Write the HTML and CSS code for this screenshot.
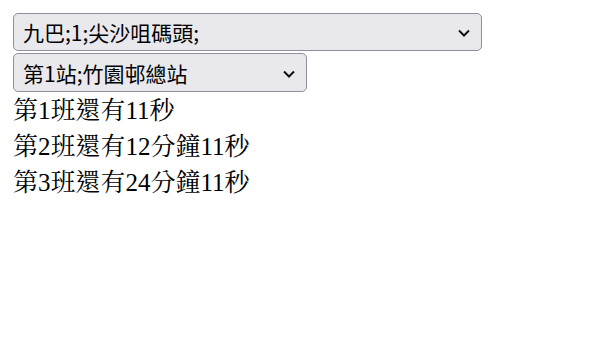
FILE: index.html
```html
<!DOCTYPE html>
<html lang="zh-Hant">
<head>
    <meta charset="UTF-8">
    <meta name="viewport" content="width=device-width, initial-scale=1.0">
    <title>巴士到站時間</title>
    <link rel="stylesheet" href="styles.css">
</head>
<body>
    <div class="pickers">
        <div class="select-wrap route">
            <select id="route-select">
                <option>九巴;1;尖沙咀碼頭;</option>
            </select>
            <svg class="chevron" width="12" height="8" viewBox="0 0 12 8"><path d="M1 1.5 L6 6.5 L11 1.5" fill="none" stroke="#111" stroke-width="2"/></svg>
        </div>
        <div class="select-wrap stop">
            <select id="stop-select">
                <option>第1站;竹園邨總站</option>
            </select>
            <svg class="chevron" width="12" height="8" viewBox="0 0 12 8"><path d="M1 1.5 L6 6.5 L11 1.5" fill="none" stroke="#111" stroke-width="2"/></svg>
        </div>
    </div>

    <div class="eta-list">
        <div class="eta">第1班還有11秒</div>
        <div class="eta">第2班還有12分鐘11秒</div>
        <div class="eta">第3班還有24分鐘11秒</div>
    </div>
</body>
</html>
```

FILE: styles.css
```css
body {
    margin: 13px;
    font-family: "Liberation Serif", "Noto Serif CJK TC", "Noto Sans CJK TC", serif;
    color: #000;
    background: #fff;
}
.pickers {
    display: flex;
    flex-direction: column;
    align-items: flex-start;
    gap: 2px;
}
.select-wrap {
    position: relative;
}
.select-wrap select {
    appearance: none;
    -webkit-appearance: none;
    display: block;
    height: 38px;
    margin: 0;
    padding: 0 30px 0 9px;
    border: 1px solid #8f8f9d;
    border-radius: 5px;
    background-color: #e9e9ed;
    color: #000;
    font-family: "Noto Sans CJK TC", "Noto Sans", sans-serif;
    font-size: 21px;
}
.route select {
    width: 469px;
}
.stop select {
    width: 294px;
    height: 39px;
}
.chevron {
    position: absolute;
    right: 12px;
    top: 50%;
    margin-top: -3px;
    pointer-events: none;
}
.eta-list {
    padding-top: 1px;
}
.eta {
    font-size: 25px;
    line-height: 36px;
}
```
